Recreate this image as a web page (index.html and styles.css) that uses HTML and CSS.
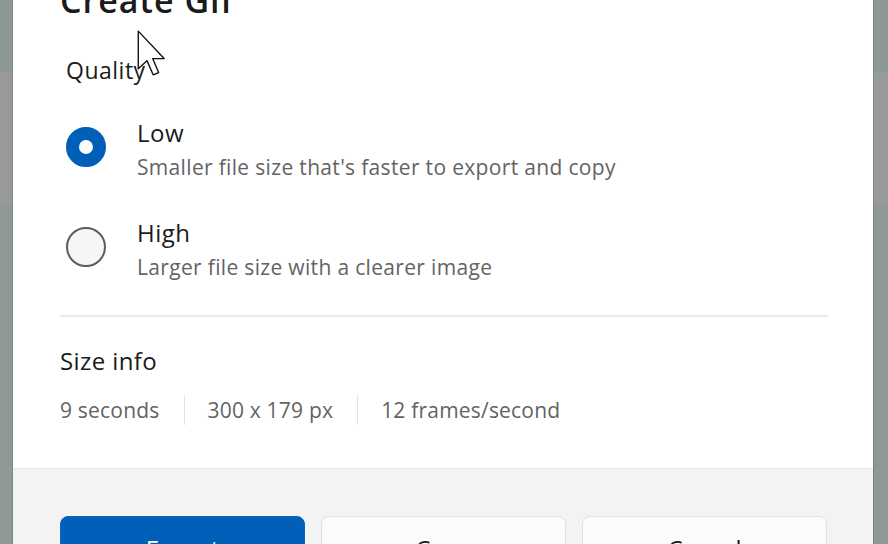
FILE: index.html
```html
<!DOCTYPE html>
<html lang="en">

<head>
  <meta charset="UTF-8">
  <meta name="viewport" content="width=device-width, initial-scale=1.0">
  <title>Create Gif</title>
  <link rel="stylesheet" href="styles.css">
</head>

<body>
  <div class="dialog">
    <div class="dialog-body">
      <h1 class="dialog-title">Create Gif</h1>
      <div class="section-label">Quality</div>

      <div class="radio-group">
        <label class="radio-row">
          <span class="radio checked"></span>
          <span class="radio-text">
            <span class="radio-title">Low</span>
            <span class="radio-desc">Smaller file size that's faster to export and copy</span>
          </span>
        </label>
        <label class="radio-row">
          <span class="radio"></span>
          <span class="radio-text">
            <span class="radio-title">High</span>
            <span class="radio-desc">Larger file size with a clearer image</span>
          </span>
        </label>
      </div>

      <div class="divider"></div>

      <div class="size-title">Size info</div>
      <div class="size-stats">
        <span class="stat">9 seconds</span>
        <span class="stat">300 x 179 px</span>
        <span class="stat">12 frames/second</span>
      </div>
    </div>

    <div class="dialog-footer">
      <button class="btn primary">Export</button>
      <button class="btn">Copy</button>
      <button class="btn">Cancel</button>
    </div>
  </div>

  <!-- mouse pointer -->
  <svg class="cursor" width="30" height="48" viewBox="0 0 13 21">
    <path d="M0.5 0.5 L0.5 17 L4.3 13.4 L7 19.6 L9.4 18.6 L6.8 12.5 L11.8 12.5 Z" fill="#fff" stroke="#111" stroke-width="0.6" stroke-linejoin="round" />
  </svg>
</body>

</html>
```

FILE: styles.css
```css
* {
  margin: 0;
  padding: 0;
  box-sizing: border-box;
}

html,
body {
  height: 100%;
  overflow: hidden;
}

body {
  font-family: "Open Sans", "Noto Sans", sans-serif;
  background: linear-gradient(to bottom, #8b9893 0, #8b9893 72px, #979a97 72px, #979a97 205px, #8f9893 205px);
  color: #1b1b1b;
  position: relative;
}

.dialog {
  margin-left: 13px;
  width: 860px;
  margin-top: -22px;
  background: #fff;
  box-shadow: 0 0 0 1px rgba(0, 0, 0, 0.12);
}

.dialog-body {
  padding: 0 45px 43px 47px;
}

.dialog-title {
  font-size: 34px;
  font-weight: 600;
  line-height: 44px;
  letter-spacing: 1px;
}

.section-label {
  margin-top: 34px;
  padding-left: 6px;
  font-size: 23px;
  line-height: 28px;
  letter-spacing: 0.5px;
}

/* 单选项 */
.radio-group {
  margin-top: 32px;
  padding-left: 6px;
  display: flex;
  flex-direction: column;
  gap: 32px;
}

.radio-row {
  display: flex;
  align-items: flex-start;
  gap: 31px;
}

.radio {
  flex: none;
  width: 40px;
  height: 40px;
  margin-top: 11px;
  border-radius: 50%;
  border: 2px solid #5d5d5d;
  background: #f6f6f6;
}

.radio.checked {
  border: 13px solid #005fb8;
  background: #fff;
}

.radio-text {
  display: flex;
  flex-direction: column;
}

.radio-title {
  font-size: 24px;
  line-height: 34px;
  letter-spacing: 0.5px;
}

.radio-desc {
  font-size: 21px;
  line-height: 34px;
  letter-spacing: 0.33px;
  color: #636363;
}

.divider {
  margin-top: 31px;
  height: 2px;
  background: #ececec;
}

.size-title {
  margin-top: 27px;
  font-size: 24px;
  line-height: 34px;
  letter-spacing: 0.4px;
}

.size-stats {
  margin-top: 17px;
  display: flex;
  font-size: 21px;
  line-height: 30px;
  letter-spacing: 0.2px;
  color: #636363;
}

.stat {
  padding: 0 24px 0 23px;
  border-left: 1px solid #e3e3e3;
}

.stat:first-child {
  padding-left: 0;
  border-left: none;
}

/* 底部按钮 */
.dialog-footer {
  background: #f3f3f3;
  border-top: 1px solid #e5e5e5;
  padding: 47px 46px 40px 47px;
  display: flex;
  gap: 16px;
}

.btn {
  width: 245px;
  height: 64px;
  border-radius: 8px;
  border: 1px solid #e2e2e2;
  background: #fbfbfb;
  color: #1b1b1b;
  font-family: inherit;
  font-size: 24px;
}

.btn.primary {
  background: #005fb8;
  border-color: #0a67be;
  color: #fff;
}

.cursor {
  position: absolute;
  left: 137px;
  top: 30px;
}
```
